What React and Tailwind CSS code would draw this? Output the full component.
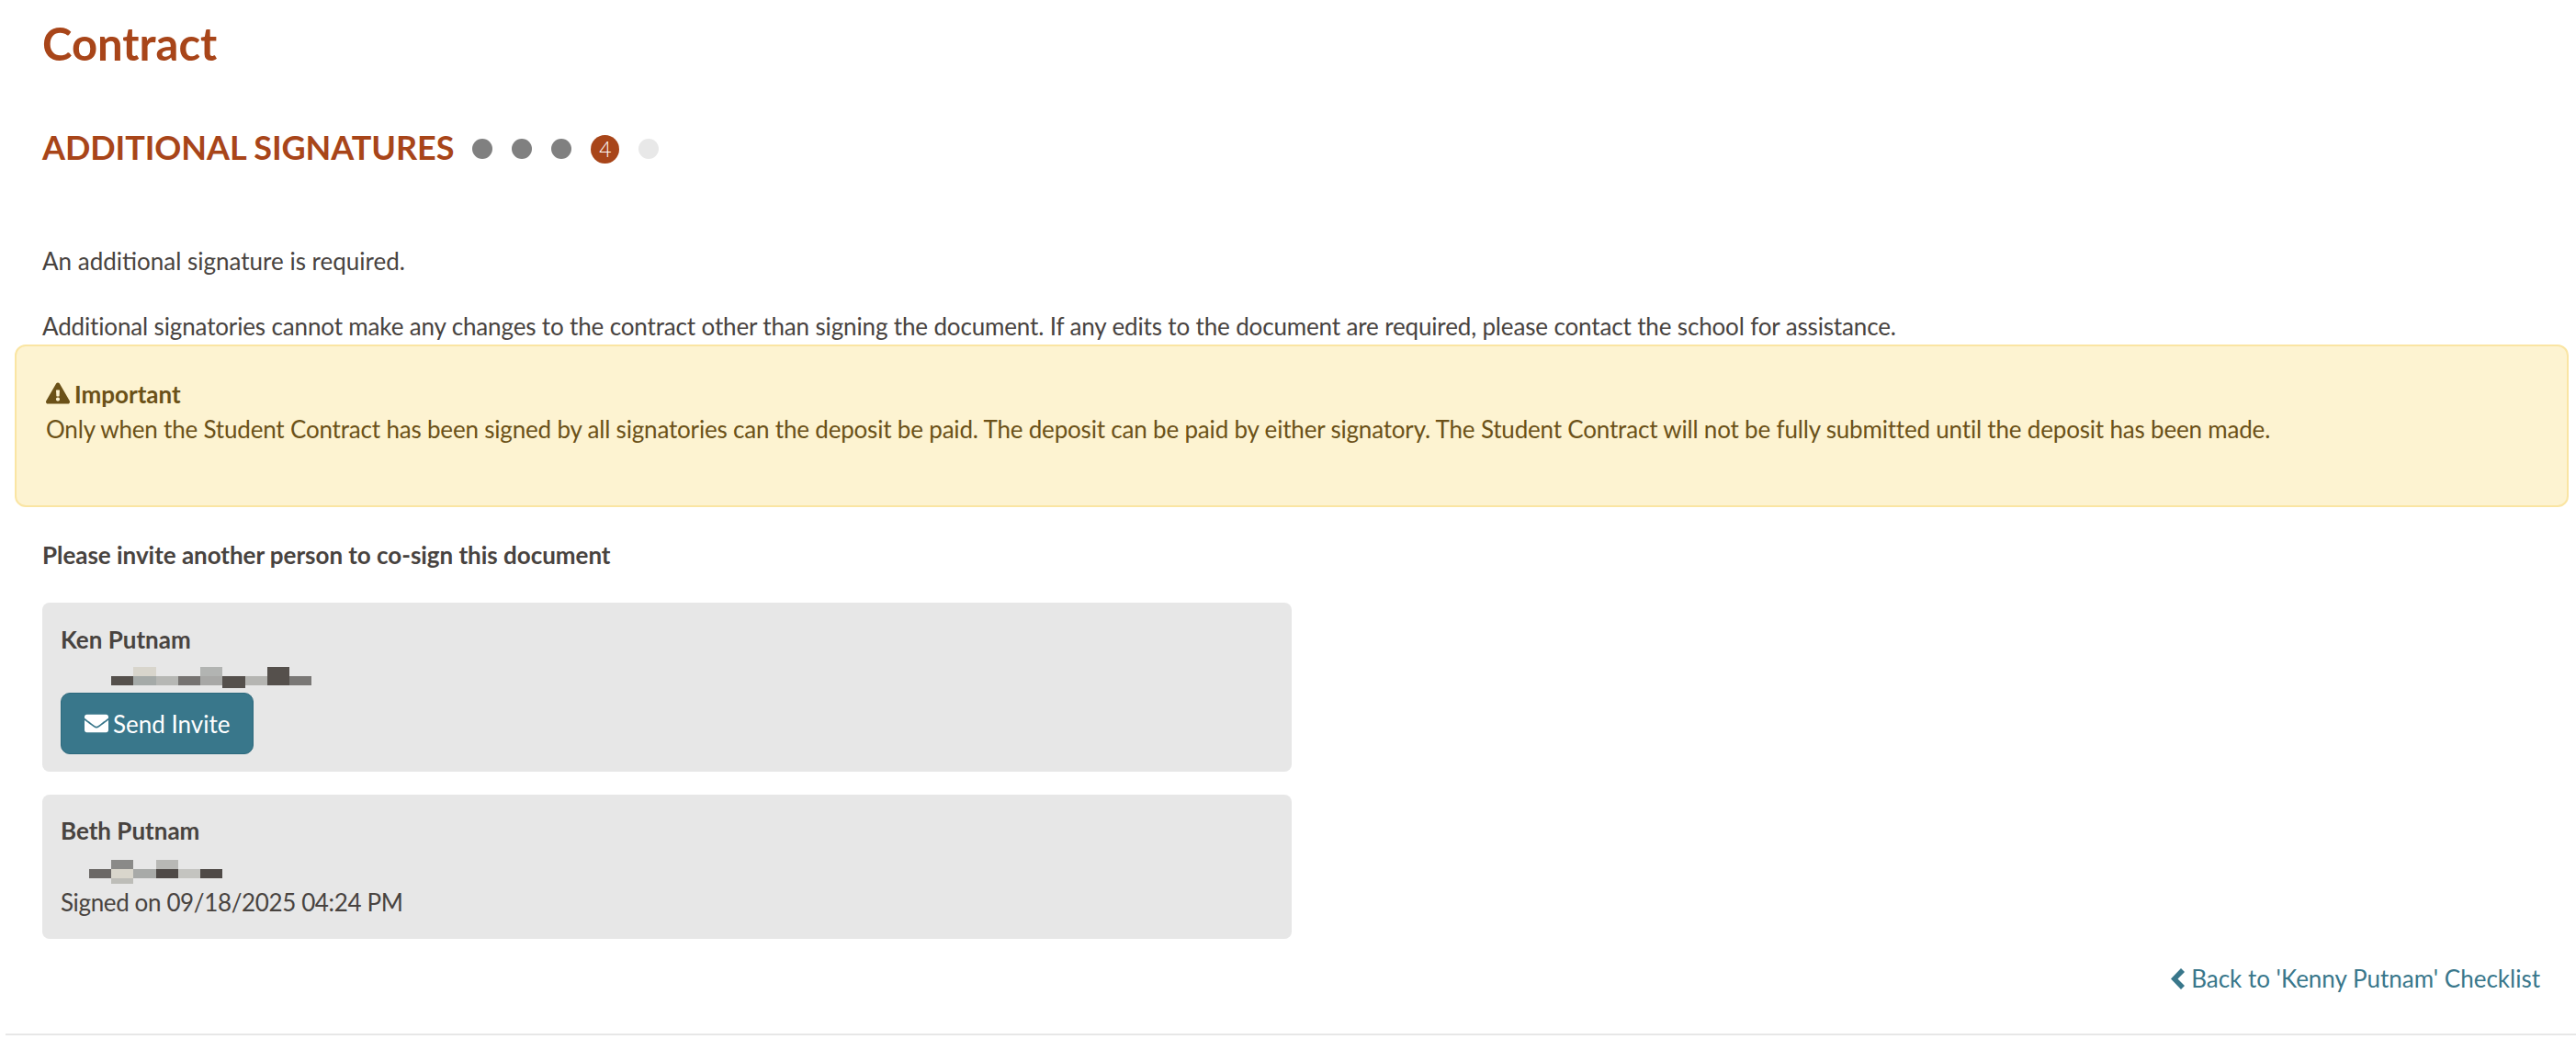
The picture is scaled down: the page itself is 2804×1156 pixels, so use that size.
import React from "react";

const Mosaic = ({ cells, width }) => (
  <svg width={width} height="28" viewBox={`0 0 ${width} 28`} className="block">
    {cells.map(([x, y, w, h, c], i) => (
      <rect key={i} x={x} y={y} width={w} height={h} fill={c} />
    ))}
  </svg>
);

const Dot = ({ c }) => <span className={`w-[22px] h-[22px] rounded-full ${c}`} />;

export default function App() {
  return (
    <div className="w-[2804px] h-[1156px] bg-white text-[26px] leading-[36px] text-[#48433f] overflow-hidden" style={{ fontFamily: "Lato, sans-serif" }}>
      <div className="px-[46px] pt-[19px]">
        <h1 className="text-[49px] leading-[56px] font-bold text-[#a84519]">Contract</h1>
        <div className="mt-[63px] flex items-center h-[48px]">
          <h2 className="text-[36px] leading-[48px] font-bold text-[#a84519] uppercase mb-[5px] tracking-[-0.06px]">Additional Signatures</h2>
          <div className="ml-[20px] flex items-center gap-[21px]">
            <Dot c="bg-[#808080]" />
            <Dot c="bg-[#808080]" />
            <Dot c="bg-[#808080]" />
            <span className="w-[31px] h-[31px] rounded-full bg-[#a84519] text-white text-[23px] font-light leading-[31px] text-center">4</span>
            <span className="w-[22px] h-[22px] rounded-full bg-[#e8e8e8]" />
          </div>
        </div>
        <p className="mt-[80px]">An additional signature is required.</p>
        <p className="mt-[35px] tracking-[-0.145px]">Additional signatories cannot make any changes to the contract other than signing the document. If any edits to the document are required, please contact the school for assistance.</p>
      </div>
      <div className="ml-[16px] mr-[8px] mt-[2px] h-[177px] rounded-[12px] border-2 border-[#fae5a3] bg-[#fdf3d1] text-[#6b5118] px-[32px] pt-[33px] leading-[38px]">
        <div className="flex items-center gap-[5px] font-bold">
          <svg width="26" height="24" viewBox="0 0 576 512" fill="#6b5118" className="mt-[-2px]">
            <path d="M569.5 440C588 472 564.8 512 527.9 512H48.1c-37 0-60.1-40-41.6-72L246.4 24c18.5-32 64.7-32 83.2 0l239.9 416zM288 354c-25.4 0-46 20.6-46 46s20.6 46 46 46 46-20.6 46-46-20.6-46-46-46zm-43.7-165.3l7.4 136c.3 6.4 5.6 11.3 12 11.3h48.5c6.4 0 11.6-5 12-11.3l7.4-136c.4-6.9-5.1-12.7-12-12.7h-63.4c-6.9 0-12.4 5.8-12 12.7z" />
          </svg>
          <span>Important</span>
        </div>
        <p className="tracking-[-0.185px]">Only when the Student Contract has been signed by all signatories can the deposit be paid. The deposit can be paid by either signatory. The Student Contract will not be fully submitted until the deposit has been made.</p>
      </div>
      <div className="px-[46px]">
        <p className="mt-[34px] font-bold tracking-[-0.03px]">Please invite another person to co-sign this document</p>
        <div className="mt-[34px] w-[1360px] h-[184px] rounded-[8px] bg-[#e7e7e7] px-[20px] pt-[22px]">
          <div className="font-bold">Ken Putnam</div>
          <div className="mt-[12px]">
            <Mosaic width={300} cells={[
              [79,0,25,10,"#d8d5cc"],[152,0,24,10,"#b2b4b2"],[225,0,24,10,"#55504c"],
              [55,10,24,10,"#55504c"],[79,10,25,10,"#a5aaa8"],[104,10,24,10,"#b6b7b4"],[128,10,24,10,"#767371"],
              [152,10,24,10,"#a8a8a6"],[176,10,25,13,"#55504c"],[201,10,24,10,"#b5b5b2"],
              [225,10,24,10,"#55504c"],[249,10,24,10,"#7a7876"]
            ]} />
          </div>
          <button className="flex items-center gap-[5px] w-[210px] h-[67px] rounded-[10px] bg-[#39778b] border border-[#2e6a7e] text-white text-[26px] pl-[25px]">
            <svg width="26" height="21" viewBox="0 0 512 384" fill="#fff">
              <path d="M502.3 126.8c3.9-3.1 9.7-.2 9.7 4.7V336c0 26.5-21.5 48-48 48H48c-26.5 0-48-21.5-48-48V131.600c0-5 5.700-7.800 9.700-4.700 22.400 17.400 52.100 39.500 154.100 113.600 21.100 15.400 56.700 47.800 92.200 47.600 35.700.3 72-32.800 92.300-47.600 102-74.100 131.600-96.300 154-113.700zM256 256c23.200.4 56.600-29.200 73.400-41.400 132.700-96.300 142.800-104.700 173.400-128.700 5.800-4.500 9.200-11.500 9.200-18.900V48c0-26.500-21.500-48-48-48H48C21.500 0 0 21.500 0 48v19c0 7.400 3.400 14.300 9.200 18.900 30.600 23.900 40.700 32.400 173.400 128.700 16.800 12.200 50.200 41.800 73.400 41.400z" />
            </svg>
            Send Invite
          </button>
        </div>
        <div className="mt-[25px] w-[1360px] h-[157px] rounded-[8px] bg-[#e7e7e7] px-[20px] pt-[21px]">
          <div className="font-bold">Beth Putnam</div>
          <div className="mt-[14px]">
            <Mosaic width={200} cells={[
              [55,0,24,10,"#8a8a88"],[104,0,24,10,"#b8b8b5"],
              [31,10,24,10,"#6b6866"],[55,10,24,10,"#d9d6cc"],[79,10,25,10,"#a8aaa8"],[104,10,24,10,"#4f4a47"],
              [128,10,24,10,"#c4c4c0"],[152,10,24,10,"#4f4a47"],[55,20,24,6,"#bdbdb8"]
            ]} />
          </div>
          <div className="tracking-[-0.37px]">Signed on 09/18/2025 04:24 PM</div>
        </div>
      </div>
      <div className="mt-[25px] pr-[39px] flex justify-end">
        <a className="flex items-center gap-[7px] text-[#39778b]">
          <svg width="15" height="23" viewBox="0 0 15 23" fill="#39778b"><path d="M11 0l4 4-7.500 7.500L15 19l-4 4L0 11.500z" /></svg>
          Back to 'Kenny Putnam' Checklist
        </a>
      </div>
      <div className="mt-[42px] ml-[6px] h-[2px] bg-[#e7e7e7]" />
    </div>
  );
}
